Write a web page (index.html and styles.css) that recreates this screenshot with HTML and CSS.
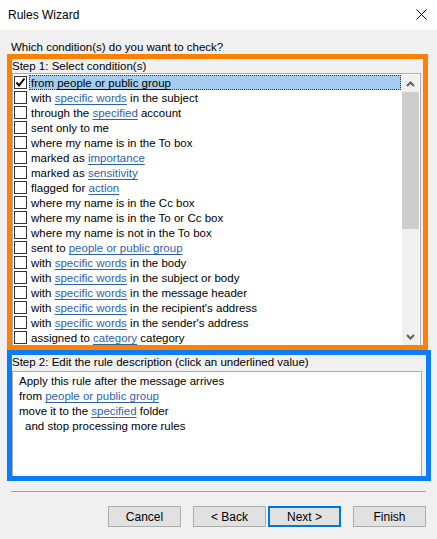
FILE: index.html
```html
<!DOCTYPE html>
<html>
<head>
<meta charset="utf-8">
<link rel="stylesheet" href="styles.css">
</head>
<body>
<div class="titlebar">
  <span class="title">Rules Wizard</span>
  <svg class="close" width="11" height="11" viewBox="0 0 11 11"><path d="M0.5 0.5 L10.5 10.5 M10.5 0.5 L0.5 10.5" stroke="#000" stroke-width="1" fill="none"/></svg>
</div>
<div class="question">Which condition(s) do you want to check?</div>
<div class="step1">
  <div class="steplabel">Step 1: Select condition(s)</div>
  <div class="listbox">
    <div class="rows">
      <div class="row"><span class="cb checked"><svg width="11" height="11" viewBox="0 0 11 11"><path d="M1.5 5.5 L4 8.5 L9.5 1.5" stroke="#000" stroke-width="2" fill="none"/></svg></span><span class="lbl sel">from <u class="plain">people or public group</u></span></div>
      <div class="row"><span class="cb"></span><span class="lbl">with <a>specific words</a> in the subject</span></div>
      <div class="row"><span class="cb"></span><span class="lbl">through the <a>specified</a> account</span></div>
      <div class="row"><span class="cb"></span><span class="lbl">sent only to me</span></div>
      <div class="row"><span class="cb"></span><span class="lbl">where my name is in the To box</span></div>
      <div class="row"><span class="cb"></span><span class="lbl">marked as <a>importance</a></span></div>
      <div class="row"><span class="cb"></span><span class="lbl">marked as <a>sensitivity</a></span></div>
      <div class="row"><span class="cb"></span><span class="lbl">flagged for <a>action</a></span></div>
      <div class="row"><span class="cb"></span><span class="lbl">where my name is in the Cc box</span></div>
      <div class="row"><span class="cb"></span><span class="lbl">where my name is in the To or Cc box</span></div>
      <div class="row"><span class="cb"></span><span class="lbl">where my name is not in the To box</span></div>
      <div class="row"><span class="cb"></span><span class="lbl">sent to <a>people or public group</a></span></div>
      <div class="row"><span class="cb"></span><span class="lbl">with <a>specific words</a> in the body</span></div>
      <div class="row"><span class="cb"></span><span class="lbl">with <a>specific words</a> in the subject or body</span></div>
      <div class="row"><span class="cb"></span><span class="lbl">with <a>specific words</a> in the message header</span></div>
      <div class="row"><span class="cb"></span><span class="lbl">with <a>specific words</a> in the recipient's address</span></div>
      <div class="row"><span class="cb"></span><span class="lbl">with <a>specific words</a> in the sender's address</span></div>
      <div class="row"><span class="cb"></span><span class="lbl">assigned to <a>category</a> category</span></div>
    </div>
    <div class="scrollbar">
      <div class="arrow"><svg width="9" height="6" viewBox="0 0 9 6"><path d="M1 5 L4.5 1.5 L8 5" stroke="#606060" stroke-width="2" fill="none"/></svg></div>
      <div class="track"><div class="thumb"></div></div>
      <div class="arrow"><svg width="9" height="6" viewBox="0 0 9 6"><path d="M1 1 L4.5 4.5 L8 1" stroke="#606060" stroke-width="2" fill="none"/></svg></div>
    </div>
  </div>
</div>
<div class="step2">
  <div class="steplabel2">Step 2: Edit the rule description (click an underlined value)</div>
  <div class="desc">
    <div>Apply this rule after the message arrives</div>
    <div>from <a>people or public group</a></div>
    <div>move it to the <a>specified</a> folder</div>
    <div class="indent">and stop processing more rules</div>
  </div>
</div>
<div class="separator"></div>
<div class="buttons">
  <button class="btn">Cancel</button>
  <button class="btn gap">&lt; Back</button>
  <button class="btn default">Next &gt;</button>
  <button class="btn gap">Finish</button>
</div>
</body>
</html>
```
FILE: styles.css
```css
html, body {
  margin: 0;
  padding: 0;
}
body {
  width: 437px;
  height: 539px;
  overflow: hidden;
  background: #f0f0f0;
  font-family: "Liberation Sans", Arial, sans-serif;
  font-size: 11.5px;
  color: #000;
}
.titlebar {
  height: 30px;
  background: #fff;
  display: flex;
  align-items: center;
  justify-content: space-between;
  padding: 0 10px 0 8px;
}
.title {
  font-size: 12px;
}
.close {
  display: block;
  margin-top: -1px;
}
.question {
  margin: 11px 0 0 11px;
  height: 13px;
  line-height: 13px;
}
.step1 {
  margin-left: 7px;
  width: 421px;
  height: 296px;
  box-sizing: border-box;
  border: 5px solid #ff8000;
  display: flex;
  flex-direction: column;
}
.steplabel {
  height: 14px;
  line-height: 14px;
}
.listbox {
  width: 409px;
  height: 272px;
  box-sizing: border-box;
  border: 1px solid #acacac;
  border-bottom: none;
  background: #fff;
  display: flex;
}
.rows {
  flex: 1;
  padding-top: 1px;
  display: flex;
  flex-direction: column;
}
.row {
  height: 15px;
  display: flex;
  align-items: center;
}
.cb {
  width: 13px;
  height: 13px;
  box-sizing: border-box;
  border: 1px solid #333;
  margin-left: 1px;
  margin-right: 2px;
  display: flex;
  align-items: center;
  justify-content: center;
  background: #fff;
}
.cb svg {
  display: block;
}
.lbl {
  flex: 1;
  height: 15px;
  box-sizing: border-box;
  border: 1px dotted transparent;
  padding: 1px 0 0 1px;
  line-height: 13px;
  margin-right: 1px;
  white-space: nowrap;
}
.lbl.sel {
  background: #a4cdef;
  border-color: #333;
}
a {
  color: #2f62a8;
  text-decoration: underline;
  text-underline-offset: 2px;
}
u.plain {
  text-underline-offset: 2px;
}
.scrollbar {
  width: 17px;
  margin: 1px 1px 0 0;
  background: #f0f0f0;
  display: flex;
  flex-direction: column;
}
.arrow {
  height: 17px;
  display: flex;
  align-items: center;
  justify-content: center;
}
.track {
  flex: 1;
}
.thumb {
  height: 137px;
  background: #cdcdcd;
}
.step2 {
  margin-left: 7px;
  width: 424px;
  height: 131px;
  box-sizing: border-box;
  border: 5px solid #0a7dff;
  display: flex;
  flex-direction: column;
}
.steplabel2 {
  height: 16px;
  line-height: 15px;
}
.desc {
  flex: 1;
  width: 410px;
  box-sizing: border-box;
  border: 1px solid #acacac;
  border-bottom: none;
  background: #fff;
  padding: 2px 0 0 6px;
  line-height: 15px;
}
.indent {
  padding-left: 6px;
}
.separator {
  margin: 10px 0 0 11px;
  width: 415px;
  height: 1px;
  background: #a0a0a0;
}
.buttons {
  margin-top: 14px;
  display: flex;
  justify-content: flex-end;
  padding-right: 11px;
}
.btn {
  width: 73px;
  height: 21px;
  box-sizing: border-box;
  border: 1px solid #adadad;
  background: #e1e1e1;
  font-family: "Liberation Sans", Arial, sans-serif;
  font-size: 12px;
  color: #000;
  padding: 0;
  margin: 0;
}
.btn.gap {
  margin-left: 12px;
}
.btn.default {
  margin-left: 2px;
  border: 2px solid #0078d7;
}
```
